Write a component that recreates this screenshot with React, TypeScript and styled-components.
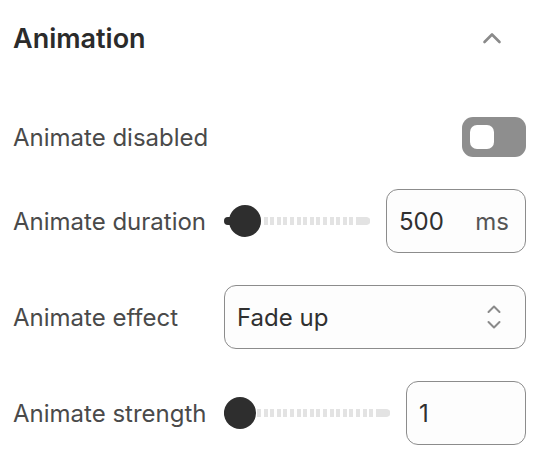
import React from "react";
import styled, { createGlobalStyle } from "styled-components";

const Global = createGlobalStyle`
  html, body { margin: 0; padding: 0; background: #ffffff; }
  body { font-family: Inter, "Noto Sans", "Liberation Sans", sans-serif; }
`;

const Panel = styled.div`
  width: 544px;
  box-sizing: border-box;
  padding: 0 18px 0 13px;
`;

const Header = styled.div`
  height: 76px;
  display: flex;
  align-items: center;
  justify-content: space-between;
`;

const Title = styled.h2`
  margin: 0;
  font-size: 27px;
  font-weight: 600;
  color: #2b2b2b;
`;

const CollapseButton = styled.button`
  border: 0;
  background: none;
  padding: 0;
  margin-right: 24px;
  width: 20px;
  height: 20px;
  display: flex;
  align-items: center;
  justify-content: center;
  color: #8a8a8a;
`;

const List = styled.div`
  margin-top: 41px;
  display: flex;
  flex-direction: column;
  gap: 32px;
`;

const Row = styled.div<{ $h: number }>`
  height: ${(p) => p.$h}px;
  display: flex;
  align-items: center;
  gap: 16px;
`;

const Label = styled.span<{ $fixed?: boolean }>`
  font-size: 24px;
  color: #4a4a4a;
  ${(p) => (p.$fixed ? "width: 195px; flex-shrink: 0; white-space: nowrap;" : "flex: 1;")}
`;

const Switch = styled.div`
  width: 64px;
  height: 40px;
  border-radius: 11px;
  background: #8e8e8e;
  box-sizing: border-box;
  padding: 8px;
  display: flex;
  align-items: center;
`;

const SwitchThumb = styled.div`
  width: 24px;
  height: 24px;
  border-radius: 7px;
  background: #ffffff;
`;

const SliderWrap = styled.div`
  flex: 1;
  position: relative;
  height: 32px;
`;

const Track = styled.div`
  position: absolute;
  left: 0;
  right: 0;
  top: 12px;
  height: 8px;
  border-radius: 4px;
  background: repeating-linear-gradient(
    90deg,
    #e3e3e3 0px,
    #e3e3e3 4px,
    transparent 4px,
    transparent 6.6px
  );
`;

const TrackEnd = styled.div`
  position: absolute;
  right: 0;
  top: 12px;
  width: 10px;
  height: 8px;
  border-radius: 0 4px 4px 0;
  background: #e3e3e3;
`;

const Fill = styled.div`
  position: absolute;
  left: 0;
  top: 12px;
  height: 8px;
  border-radius: 4px 0 0 4px;
  background: #2e2e2e;
`;

const Thumb = styled.div`
  position: absolute;
  top: 0;
  width: 32px;
  height: 32px;
  border-radius: 50%;
  background: #2e2e2e;
`;

const Field = styled.div<{ $w: number }>`
  width: ${(p) => p.$w}px;
  height: 64px;
  box-sizing: border-box;
  border: 1px solid #8c8c8c;
  border-radius: 12px;
  background: #fdfdfd;
  display: flex;
  align-items: center;
  justify-content: space-between;
  padding: 0 16px 0 12px;
  font-size: 24px;
  color: #303030;
  flex-shrink: 0;
`;

const Unit = styled.span`
  color: #555555;
`;

const Select = styled.div`
  flex: 1;
  height: 64px;
  box-sizing: border-box;
  border: 1px solid #8c8c8c;
  border-radius: 12px;
  background: #fdfdfd;
  display: flex;
  align-items: center;
  justify-content: space-between;
  padding: 0 24px 0 12px;
  font-size: 24px;
  color: #303030;
`;

type SliderProps = { value: number; min: number; max: number };

function Slider({ value, min, max }: SliderProps) {
  const frac = (value - min) / (max - min);
  return (
    <SliderWrap>
      <Track />
      <TrackEnd />
      <Fill style={{ width: `calc(${frac} * (100% - 32px) + 16px)` }} />
      <Thumb style={{ left: `calc(${frac} * (100% - 32px))` }} />
    </SliderWrap>
  );
}

function ChevronUp() {
  return (
    <svg width="20" height="12" viewBox="0 0 20 12" fill="none">
      <path d="M2.5 10 L10 2.5 L17.5 10" stroke="currentColor" strokeWidth="2.6" strokeLinecap="round" strokeLinejoin="round" />
    </svg>
  );
}

function UpDown() {
  return (
    <svg width="14" height="26" viewBox="0 0 14 26" fill="none">
      <path d="M1.5 8 L7 2.5 L12.5 8" stroke="#8a8a8a" strokeWidth="2" strokeLinecap="round" strokeLinejoin="round" />
      <path d="M1.5 18 L7 23.5 L12.5 18" stroke="#8a8a8a" strokeWidth="2" strokeLinecap="round" strokeLinejoin="round" />
    </svg>
  );
}

export default function App() {
  return (
    <>
      <Global />
      <Panel>
        <Header>
          <Title>Animation</Title>
          <CollapseButton aria-label="Collapse">
            <ChevronUp />
          </CollapseButton>
        </Header>
        <List>
          <Row $h={40}>
            <Label>Animate disabled</Label>
            <Switch>
              <SwitchThumb />
            </Switch>
          </Row>
          <Row $h={64}>
            <Label $fixed>Animate duration</Label>
            <Slider value={500} min={100} max={10000} />
            <Field $w={140}>
              <span>500</span>
              <Unit>ms</Unit>
            </Field>
          </Row>
          <Row $h={64}>
            <Label $fixed>Animate effect</Label>
            <Select>
              <span>Fade up</span>
              <UpDown />
            </Select>
          </Row>
          <Row $h={64}>
            <Label $fixed>Animate strength</Label>
            <Slider value={1} min={1} max={10} />
            <Field $w={120}>
              <span>1</span>
            </Field>
          </Row>
        </List>
      </Panel>
    </>
  );
}
